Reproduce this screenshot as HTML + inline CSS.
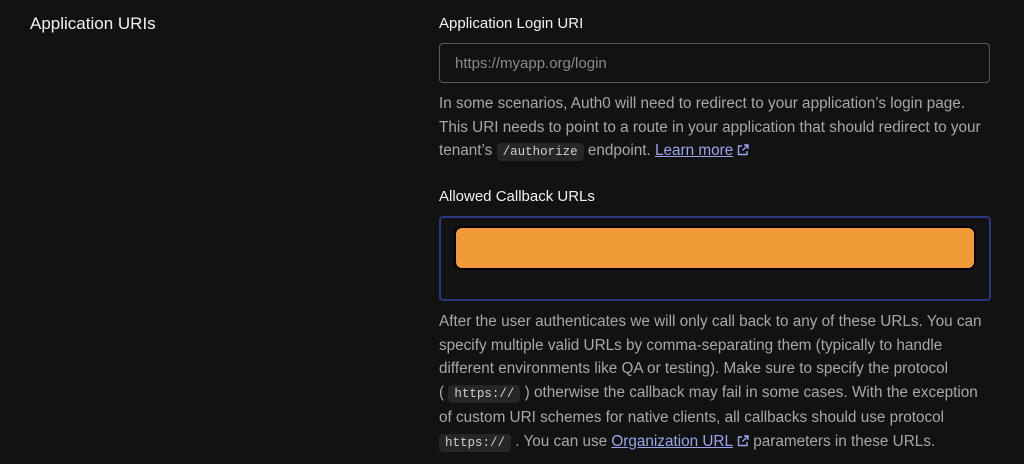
<!DOCTYPE html>
<html><head><meta charset="utf-8"><style>
html,body{margin:0;padding:0;background:#121212;width:1024px;height:464px;overflow:hidden;font-family:"Liberation Sans",sans-serif;}
.t{position:absolute;left:30px;top:14px;color:#f2f2f2;font-size:17px;}
.col{position:absolute;left:439px;width:580px;}
.lbl{color:#f2f2f2;font-size:15px;}
.p{color:#a8a8a8;font-size:15.3px;line-height:23.5px;white-space:nowrap;}
code{font-family:"Liberation Mono",monospace;font-size:12.5px;background:#262626;color:#cfcfcf;padding:2px 6px;border-radius:4px;}
a{color:#9aa5ec;text-decoration:underline;}
svg{vertical-align:-1px;margin-left:4px;}
</style></head><body>
<div class="t">Application URIs</div>
<div class="col" style="top:15px"><div class="lbl">Application Login URI</div></div>
<div style="position:absolute;left:439px;top:43px;width:549px;height:38px;border:1px solid #5a5a5a;border-radius:4px;"></div>
<div style="position:absolute;left:455px;top:55px;color:#8a8a8a;font-size:15px;">https://myapp.org/login</div>
<div class="col p" style="top:92px">In some scenarios, Auth0 will need to redirect to your application’s login page.<br>This URI needs to point to a route in your application that should redirect to your<br>tenant’s <code>/authorize</code> endpoint. <a>Learn more</a><svg width="12" height="12" viewBox="0 0 12 12" fill="none" stroke="#9aa5ec" stroke-width="1.4"><path d="M5 2H1.5v8.5H10V7M7 1h4v4M11 1L5.5 6.5"/></svg></div>
<div class="col" style="top:188px"><div class="lbl">Allowed Callback URLs</div></div>
<div style="position:absolute;left:439px;top:216px;width:548px;height:81px;border:2px solid #2b3580;border-radius:4px;"></div>
<div style="position:absolute;left:454px;top:226px;width:518px;height:40px;background:#f09b38;border:2px solid #000;border-radius:8px;"></div>
<div class="col p" style="top:310px">After the user authenticates we will only call back to any of these URLs. You can<br>specify multiple valid URLs by comma-separating them (typically to handle<br>different environments like QA or testing). Make sure to specify the protocol<br>( <code>https://</code> ) otherwise the callback may fail in some cases. With the exception<br>of custom URI schemes for native clients, all callbacks should use protocol<br><code>https://</code> . You can use <a>Organization URL</a><svg width="12" height="12" viewBox="0 0 12 12" fill="none" stroke="#9aa5ec" stroke-width="1.4"><path d="M5 2H1.5v8.5H10V7M7 1h4v4M11 1L5.5 6.5"/></svg> parameters in these URLs.</div>
</body></html>
